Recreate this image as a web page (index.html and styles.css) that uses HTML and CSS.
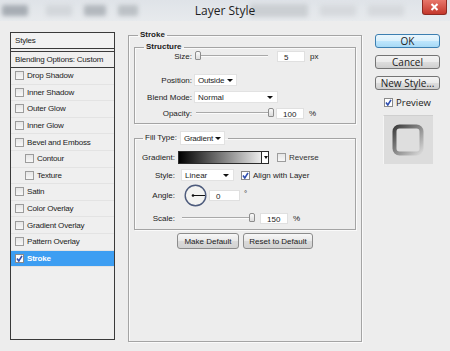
FILE: index.html
```html
<!DOCTYPE html>
<html lang="en">
<head>
    <meta charset="UTF-8">
    <title>Layer Style</title>
    <link rel="stylesheet" href="styles.css">
</head>
<body>

<div class="titlebar">
    <div class="ghost g1"></div>
    <div class="ghost g2"></div>
    <div class="ghost g3"></div>
    <div class="ghost g4"></div>
    <div class="ghost g5"></div>
    <div class="ghost g6"></div>
    <div class="ghost g7"></div>
    <span class="title">Layer Style</span>
    <div class="close">
        <svg width="9" height="8" viewBox="0 0 9 8"><path d="M1.5 1 L7.5 7 M7.5 1 L1.5 7" stroke="#fff" stroke-width="2"/></svg>
    </div>
</div>

<div class="dialog">
    <!-- left: list of effects -->
    <div class="style-list">
        <div class="list-head">Styles</div>
        <div class="list-blend">Blending Options: Custom</div>
        <div class="list-item"><span class="check"></span>Drop Shadow</div>
        <div class="list-item"><span class="check"></span>Inner Shadow</div>
        <div class="list-item"><span class="check"></span>Outer Glow</div>
        <div class="list-item"><span class="check"></span>Inner Glow</div>
        <div class="list-item"><span class="check"></span>Bevel and Emboss</div>
        <div class="list-item sub"><span class="check"></span>Contour</div>
        <div class="list-item sub"><span class="check"></span>Texture</div>
        <div class="list-item"><span class="check"></span>Satin</div>
        <div class="list-item"><span class="check"></span>Color Overlay</div>
        <div class="list-item"><span class="check"></span>Gradient Overlay</div>
        <div class="list-item"><span class="check"></span>Pattern Overlay</div>
        <div class="list-item selected"><span class="check on"><svg width="7" height="7" viewBox="0 0 7 7"><path d="M1 3.5 L2.8 6 L6 0.8" fill="none" stroke="#2f4fb0" stroke-width="1.6"/></svg></span>Stroke</div>
    </div>

    <!-- middle: stroke settings -->
    <fieldset class="group stroke">
        <legend>Stroke</legend>

        <fieldset class="group structure">
            <legend>Structure</legend>
            <div class="row r-size">
                <span class="lbl">Size:</span>
                <div class="ctl">
                    <div class="slider"><span class="thumb" style="left: 2%"></span></div>
                    <span class="field">5</span>
                    <span class="unit">px</span>
                </div>
            </div>
            <div class="row r-pos">
                <span class="lbl">Position:</span>
                <div class="ctl"><span class="select w-pos">Outside<i class="arrow"></i></span></div>
            </div>
            <div class="row r-blend">
                <span class="lbl">Blend Mode:</span>
                <div class="ctl"><span class="select w-blend">Normal<i class="arrow"></i></span></div>
            </div>
            <div class="row r-opac">
                <span class="lbl">Opacity:</span>
                <div class="ctl">
                    <div class="slider"><span class="thumb" style="left: 97%"></span></div>
                    <span class="field">100</span>
                    <span class="unit">%</span>
                </div>
            </div>
        </fieldset>

        <fieldset class="group fill">
            <legend><span class="legend-lbl">Fill Type:</span><span class="select w-fill">Gradient<i class="arrow"></i></span></legend>
            <div class="row r-grad">
                <span class="lbl">Gradient:</span>
                <div class="ctl">
                    <span class="gradient"><i class="grad-drop"><i class="arrow"></i></i></span>
                    <span class="check-wrap rev"><span class="check"></span>Reverse</span>
                </div>
            </div>
            <div class="row r-style">
                <span class="lbl">Style:</span>
                <div class="ctl">
                    <span class="select w-style">Linear<i class="arrow"></i></span>
                    <span class="check-wrap align"><span class="check on"><svg width="7" height="7" viewBox="0 0 7 7"><path d="M1 3.5 L2.8 6 L6 0.8" fill="none" stroke="#2f4fb0" stroke-width="1.6"/></svg></span>Align with Layer</span>
                </div>
            </div>
            <div class="row r-angle">
                <span class="lbl">Angle:</span>
                <div class="ctl">
                    <svg class="dial" width="23" height="23" viewBox="0 0 23 23">
                        <circle cx="11.5" cy="11.5" r="10.3" fill="#f3f3f1" stroke="#4d5b7c" stroke-width="1.4"/>
                        <line x1="9" y1="11.5" x2="21" y2="11.5" stroke="#111" stroke-width="1"/>
                        <circle cx="9" cy="11.5" r="1.3" fill="#111"/>
                    </svg>
                    <span class="field w-angle">0</span>
                    <span class="deg">°</span>
                </div>
            </div>
            <div class="row r-scale">
                <span class="lbl">Scale:</span>
                <div class="ctl">
                    <div class="slider s-scale"><span class="thumb" style="left: 95%"></span></div>
                    <span class="field">150</span>
                    <span class="unit">%</span>
                </div>
            </div>
        </fieldset>

        <div class="defaults">
            <button class="btn make">Make Default</button>
            <button class="btn reset">Reset to Default</button>
        </div>
    </fieldset>

    <!-- right: dialog buttons -->
    <div class="actions">
        <button class="dlg-btn ok">OK</button>
        <button class="dlg-btn">Cancel</button>
        <button class="dlg-btn">New Style...</button>
        <div class="preview-check"><span class="check on"><svg width="7" height="7" viewBox="0 0 7 7"><path d="M1 3.5 L2.8 6 L6 0.8" fill="none" stroke="#2f4fb0" stroke-width="1.6"/></svg></span>Preview</div>
        <div class="preview">
            <svg width="32" height="32" viewBox="0 0 32 32">
                <defs>
                    <linearGradient id="pg" x1="0" y1="0" x2="1" y2="1">
                        <stop offset="0" stop-color="#3e3e3e"/>
                        <stop offset="1" stop-color="#d8d8d8"/>
                    </linearGradient>
                </defs>
                <rect x="2.5" y="2.5" width="27" height="27" rx="5" fill="#dedede" stroke="url(#pg)" stroke-width="4"/>
            </svg>
        </div>
    </div>
</div>

</body>
</html>
```

FILE: styles.css
```css
body {
    margin: 0;
    width: 450px;
    height: 351px;
    overflow: hidden;
    background: #ededed;
    font-family: "Liberation Sans", Arial, sans-serif;
    font-size: 8px;
    color: #1b1b1b;
}

/* title bar with the blurred toolbar behind it */
.titlebar {
    position: relative;
    height: 21px;
    display: flex;
    align-items: center;
    gap: 12px;
    background: linear-gradient(#dfe3e8, #e7eaed);
    overflow: hidden;
}
.ghost {
    height: 11px;
    background: #b8bdc3;
    filter: blur(2px);
    border-radius: 2px;
}
.g1 { width: 26px; background: #a7adb4; margin-left: 2px; }
.g2 { width: 26px; background: #d3d7db; margin-left: 6px; }
.g3 { width: 22px; background: #b3b8be; }
.g4 { width: 20px; background: #bcc1c6; }
.g5 { width: 58px; height: 13px; background: #cbcfd3; margin-left: 100px; }
.g6 { width: 36px; background: #d6d9dd; }
.g7 { width: 36px; background: #d6d9dd; }
.title {
    position: absolute;
    left: 0;
    right: 0;
    top: 0;
    line-height: 21px;
    text-align: center;
    font-family: "Open Sans", "Noto Sans", sans-serif;
    font-size: 12px;
    color: #1e1e1e;
}
.close {
    position: absolute;
    right: 3px;
    top: 0;
    width: 25px;
    height: 15px;
    display: flex;
    align-items: center;
    justify-content: center;
    background: linear-gradient(#e8776b, #c4382c);
    border: 1px solid #8e2a22;
    border-top: none;
    border-radius: 0 0 3px 3px;
    box-sizing: border-box;
}

.dialog {
    display: grid;
    grid-template-columns: 105px 234px 65px;
    column-gap: 13px;
    padding: 11px 0 0 10px;
    align-items: start;
}

/* effects list */
.style-list {
    height: 308px;
    border: 1px solid #3a3a3a;
    box-sizing: border-box;
    background: #efefef;
    letter-spacing: -0.2px;
}
.list-head {
    height: 15px;
    line-height: 15px;
    padding-left: 4px;
    border-bottom: 1px solid #3a3a3a;
    background: #f2f2f2;
}
.list-blend {
    height: 15px;
    line-height: 15px;
    padding-left: 4px;
    margin-top: 2px;
    border-top: 1px solid #3a3a3a;
    border-bottom: 1px solid #3a3a3a;
}
.list-item {
    height: 16.6px;
    display: flex;
    align-items: center;
    padding-left: 4px;
    border-bottom: 1px solid #e3e3e3;
    box-sizing: border-box;
}
.list-item.sub { padding-left: 14px; }
.list-item.selected {
    background: #3d9ef2;
    color: #fff;
    font-weight: bold;
}

.check {
    width: 9px;
    height: 9px;
    margin-right: 3px;
    box-sizing: border-box;
    border: 1px solid #9c9c9c;
    background: linear-gradient(#e6e6e6, #f7f7f7);
    display: inline-flex;
    align-items: center;
    justify-content: center;
    flex-shrink: 0;
}
.check.on {
    background: #fff;
    border-color: #8a8a8a;
}

/* fieldsets */
.group {
    margin: 0;
    border: 1px solid #a4a4a4;
    box-shadow: inset 1px 1px 0 #fafafa, 1px 1px 0 #fafafa;
}
.group legend {
    font-weight: bold;
    line-height: 10px;
    padding: 0 2px;
}
.stroke {
    height: 312px;
    margin-top: -2px;
    padding: 2px 5px 0 5px;
    box-sizing: border-box;
}
.stroke > legend { margin-left: 4px; }
.structure {
    padding: 0 0 4px 0;
}
.structure > legend { margin-left: 9px; }
.fill {
    margin-top: 7px;
    padding: 0 0 5px 0;
}
.fill > legend {
    margin-left: 8px;
    display: flex;
    align-items: center;
    font-weight: normal;
    padding: 0 3px 0 2px;
}
.legend-lbl { margin-right: 3px; }

.row {
    display: grid;
    align-items: center;
    height: 12px;
}
.structure .row { grid-template-columns: 57px auto; column-gap: 2px; }
.fill .row { grid-template-columns: 40px auto; column-gap: 3px; }
.lbl { text-align: right; white-space: nowrap; }
.ctl { display: flex; align-items: center; }

.r-size { margin-top: -2px; }
.r-pos { margin-top: 12px; }
.r-blend { margin-top: 5px; }
.r-opac { margin-top: 4px; }

.r-grad { margin-top: 6px; height: 13px; }
.r-style { margin-top: 5px; }
.r-angle { margin-top: 3px; height: 23px; }
.r-scale { margin-top: 5px; }

/* inputs */
.field {
    width: 28px;
    height: 11px;
    line-height: 11px;
    padding-left: 6px;
    box-sizing: border-box;
    background: #fff;
    border: 1px solid #e0e0e0;
}
.unit { margin-left: 5px; }
.w-angle { width: 31px; margin-left: 2px; }
.deg { margin-left: 4px; margin-top: -5px; }

.select {
    position: relative;
    height: 12px;
    line-height: 12px;
    padding-left: 3px;
    box-sizing: border-box;
    background: #fff;
    border: 1px solid #e2e2e2;
    display: inline-block;
}
.arrow {
    position: absolute;
    right: 4px;
    top: 4px;
    border-left: 3px solid transparent;
    border-right: 3px solid transparent;
    border-top: 3px solid #111;
}
.w-pos { width: 43px; letter-spacing: -0.2px; }
.w-pos .arrow { right: 3px; }
.w-blend { width: 84px; }
.w-fill { width: 45px; height: 14px; line-height: 14px; letter-spacing: -0.2px; }
.w-fill .arrow { top: 5px; right: 3px; }
.w-style { width: 53px; margin-left: 3px; }

.slider {
    position: relative;
    width: 76px;
    height: 10px;
    margin-right: 7px;
}
.slider::before {
    content: "";
    position: absolute;
    left: 2px;
    right: 2px;
    top: 4px;
    border-top: 1px solid #a9a9a9;
    border-bottom: 1px solid #fbfbfb;
}
.thumb {
    position: absolute;
    top: 0;
    width: 6px;
    height: 9px;
    margin-left: -1px;
    box-sizing: border-box;
    border: 1px solid #8d8d8d;
    border-radius: 2px 2px 1px 1px;
    background: linear-gradient(#fafafa, #dcdcdc);
}
.r-opac .slider { width: 77px; margin-right: 5px; }
.s-scale { width: 74px; margin-left: 2px; margin-right: 6px; }

.gradient {
    position: relative;
    width: 91px;
    height: 13px;
    box-sizing: border-box;
    border: 1px solid #2b2b2b;
    background: linear-gradient(to right, #000, #fff);
}
.grad-drop {
    position: absolute;
    right: 0;
    top: 0;
    width: 6px;
    height: 11px;
    background: #fff;
    border-left: 1px solid #2b2b2b;
}
.grad-drop .arrow {
    right: 0;
    top: 4px;
    border-left-width: 2px;
    border-right-width: 2px;
}
.check-wrap { display: flex; align-items: center; }
.rev { margin-left: 8px; color: #333; }
.align { margin-left: 7px; }
.dial { margin-left: 6px; }

.defaults {
    display: flex;
    justify-content: center;
    gap: 4px;
    margin-top: 3px;
}
.btn {
    height: 16px;
    padding: 0;
    font-family: "Liberation Sans", Arial, sans-serif;
    font-size: 8px;
    color: #1b1b1b;
    border: 1px solid #8c8c8c;
    border-radius: 3px;
    background: linear-gradient(#f7f7f7, #e8e8e8 50%, #dadada 51%, #d2d2d2);
}
.make { width: 62px; }
.reset { width: 70px; }

/* right column */
.actions {
    display: flex;
    flex-direction: column;
    align-items: center;
    margin-top: 2px;
}
.dlg-btn {
    width: 65px;
    height: 14px;
    padding: 0;
    margin-bottom: 7px;
    font-family: "Open Sans", "Noto Sans", sans-serif;
    font-size: 10px;
    line-height: 12px;
    color: #1b1b1b;
    border: 1px solid #747474;
    border-radius: 3px;
    background: linear-gradient(#f3f3f3, #ebebeb 50%, #dddddd 51%, #cfcfcf);
}
.dlg-btn.ok {
    border-color: #3c7fb1;
    background: linear-gradient(#eaf6fd, #d9f0fc 50%, #bee6fd 51%, #a7d9f5);
}
.preview-check {
    display: flex;
    align-items: center;
    font-family: "Open Sans", "Noto Sans", sans-serif;
    font-size: 9.5px;
    margin-top: -1px;
}
.preview {
    width: 50px;
    height: 49px;
    margin-top: 6px;
    display: flex;
    align-items: center;
    justify-content: center;
    background: #dcdcdc;
    border-left: 1px solid #f5f5f5;
    border-top: 1px solid #cfcfcf;
    box-sizing: border-box;
}
```
